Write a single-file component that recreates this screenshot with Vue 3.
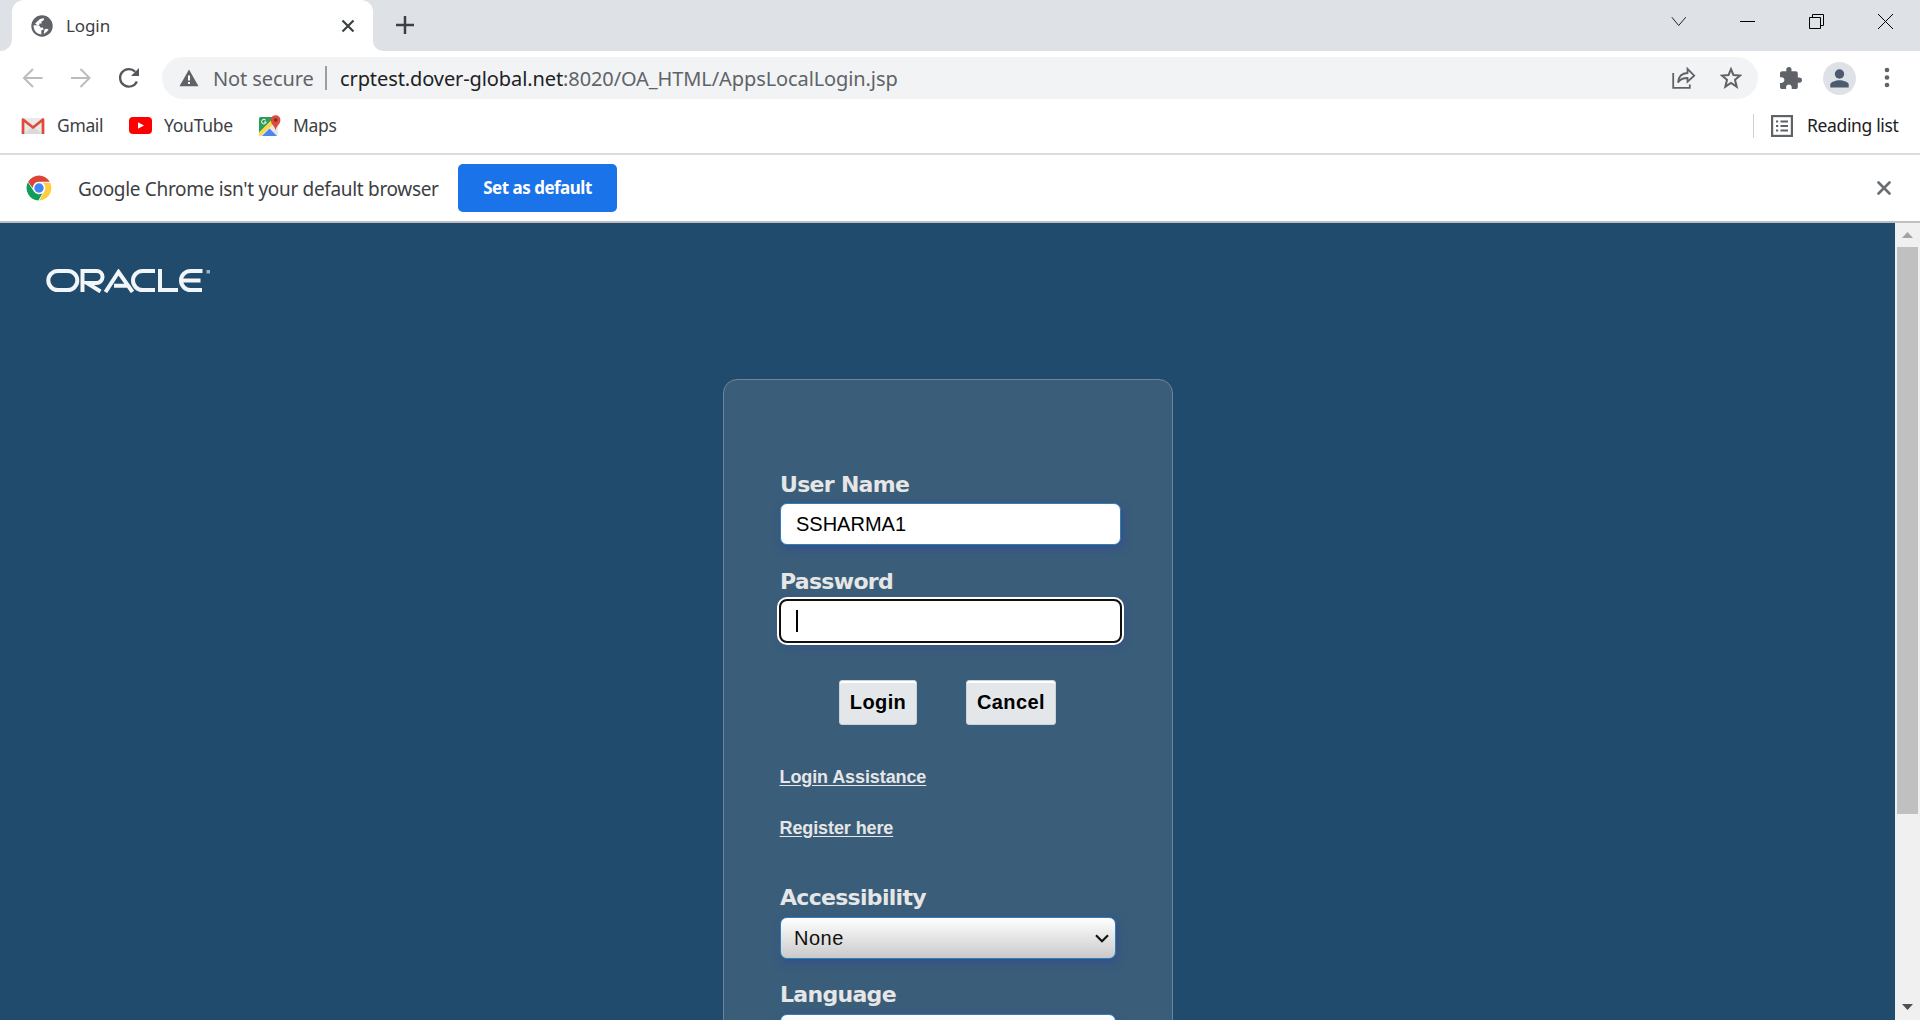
<script setup>
import { ref } from 'vue'

const userName = ref('SSHARMA1')
</script>

<template>
  <div class="window">
    <header class="tabstrip">
      <div class="edge"></div>
      <div class="tab">
        <svg class="globe" width="22" height="22" viewBox="0 0 22 22">
          <circle cx="11" cy="11" r="10.7" fill="#5f6368" />
          <path d="M2.600 10.300H7.200Q9.200 10.500 9.300 12.600H11.400Q12.800 13 12.600 14.600L10.300 15.600V19.400C5.500 19.200 2.400 15.200 2.600 10.300Z" fill="#fff" />
          <path d="M6.200 6.400Q9 3 13 3.300Q13.300 6 10.500 6.300V8.400H8.300V10.200H6.700L4 8.800Z" fill="#fff" />
          <path d="M13.500 14.500Q15.500 13 17.600 14.800Q15.500 17.800 12.600 19Z" fill="#fff" />
        </svg>
        <span class="title t-tab">Login</span>
        <svg class="tabx" width="14" height="14" viewBox="0 0 14 14"><path d="M1.5 1.5L12.5 12.5M12.5 1.5L1.5 12.5" stroke="#3c4043" stroke-width="2.2" /></svg>
      </div>
      <div class="rest">
        <svg class="plus" width="18" height="18" viewBox="0 0 18 18"><path d="M9 .5V17.5M.5 9H17.5" stroke="#3c4043" stroke-width="2.5" stroke-linecap="round" /></svg>
        <div class="controls">
          <svg width="16" height="16" viewBox="0 0 16 16"><path d="M.8 4.200L7.700 12.500L14.800 4.200" fill="none" stroke="#222" /></svg>
          <svg width="16" height="16" viewBox="0 0 16 16"><path d="M0 8.500H15" stroke="#000" /></svg>
          <svg width="16" height="16" viewBox="0 0 16 16"><path d="M.5 4.500H11.500V15.500H.5ZM3.500 4.500V1.500H14.500V12.500H11.500" fill="none" stroke="#000" /></svg>
          <svg width="16" height="16" viewBox="0 0 16 16"><path d="M0 1L15 16M15 1L0 16" stroke="#000" /></svg>
        </div>
      </div>
    </header>

    <div class="toolbar">
      <svg class="nav" width="22" height="22" viewBox="0 0 22 22"><path d="M20.5 11H2M11 2L2 11L11 20" fill="none" stroke="#babcbe" stroke-width="2" /></svg>
      <svg class="nav fwd" width="22" height="22" viewBox="0 0 22 22"><path d="M1 11H19.5M10.5 2L19.5 11L10.5 20" fill="none" stroke="#babcbe" stroke-width="2" /></svg>
      <svg class="nav reload" width="22" height="22" viewBox="0 0 22 22"><path d="M18.900 14.500A8.800 8.800 0 1 1 17.200 4.700" fill="none" stroke="#54585d" stroke-width="2.300" /><path d="M21 1V9H13Z" fill="#54585d" /></svg>
      <div class="omnibox">
        <svg class="warn" width="20" height="18" viewBox="0 0 20 18"><path d="M10 .5L19.500 17.300H.5Z" fill="#5f6368" /><path d="M10 6.500V11.500M10 13V15" stroke="#fff" stroke-width="2" /></svg>
        <span class="notsec">Not secure</span>
        <span class="bar"></span>
        <span class="url"><b>crptest.dover-global.net</b>:8020/OA_HTML/AppsLocalLogin.jsp</span>
        <svg class="share" width="24" height="22" viewBox="0 0 24 22"><path d="M1.200 6V20.800H17.800V17.500" fill="none" stroke="#5f6368" stroke-width="1.800" /><path d="M6 15.500C6.500 9.500 10 6.200 15.500 6V1.800L22.200 8.700L15.500 14.700V11C11 11 8 12.200 6 15.500Z" fill="none" stroke="#5f6368" stroke-width="1.800" /></svg>
        <svg class="star" width="22" height="22" viewBox="0 0 22 22"><path d="M11 2.200L13.400 8L20 8.600L15 12.800L16.700 19.700L11 16L5.300 19.700L7 12.800L2 8.600L8.600 8Z" fill="none" stroke="#5f6368" stroke-width="2" /></svg>
      </div>
      <svg class="puzzle" width="22" height="22" viewBox="2 1 21 21"><path d="M20.500 11H19V7c0-1.100-.9-2-2-2h-4V3.500a2.500 2.500 0 0 0-5 0V5H4c-1.100 0-1.990.9-1.990 2v3.800H3.500c1.490 0 2.700 1.210 2.700 2.700s-1.210 2.700-2.700 2.700H2V20c0 1.100.9 2 2 2h3.800v-1.500c0-1.490 1.210-2.700 2.700-2.700s2.700 1.210 2.700 2.700V22H17c1.100 0 2-.9 2-2v-4h1.500a2.500 2.500 0 0 0 0-5z" fill="#5f6368" /></svg>
      <svg class="avatar" width="33" height="33" viewBox="0 0 33 33"><circle cx="16.500" cy="16.500" r="16.500" fill="#dee1e6" /><circle cx="16.500" cy="12" r="4.700" fill="#4c5a70" /><path d="M7.300 25.500V22.500C7.300 19.800 13 18.200 16.500 18.200S25.700 19.800 25.700 22.500V25.500Z" fill="#4c5a70" /></svg>
      <svg class="dots" width="6" height="22" viewBox="0 0 6 22"><g fill="#5f6368"><circle cx="3" cy="3" r="2.300" /><circle cx="3" cy="10.500" r="2.300" /><circle cx="3" cy="18" r="2.300" /></g></svg>
    </div>

    <nav class="bookmarks">
      <svg class="bi gm" width="24" height="18" viewBox="0 0 24 18"><rect x="1" y="1" width="22" height="16" rx="1.500" fill="#e9e9e9" /><path d="M3 17L12 9L21 17Z" fill="#dadada" /><path d="M2 17V2.500L12 10.500L22 2.500V17" fill="none" stroke="#dc4b3e" stroke-width="2.700" stroke-linejoin="round" /></svg>
      <span class="bt t-gmail">Gmail</span>
      <svg class="bi yt" width="23" height="17" viewBox="0 0 23 17"><rect width="23" height="17" rx="4" fill="#f00" /><path d="M9 5.200L15 8.500L9 11.800Z" fill="#fff" /></svg>
      <span class="bt t-yt">YouTube</span>
      <svg class="bi mp" width="22" height="22" viewBox="0 0 22 22">
        <rect x="0" y="2" width="19" height="19" rx="1.500" fill="#e9e9e9" />
        <path d="M1.500 2H16L0 18V3.500Q0 2 1.500 2Z" fill="#2b9e5b" />
        <path d="M3 21L10.500 13.500L18 21Z" fill="#4b86ee" />
        <path d="M0 17.500L13 4.500L15 8.500L1.500 21Q0 21 0 19Z" fill="#fbd84a" />
        <path d="M16.500 16C16.200 11 11.800 9.500 11.800 5A4.800 4.800 0 0 1 21.400 5C21.400 9.500 16.800 11 16.500 16Z" fill="#dd4b3e" />
        <circle cx="16.600" cy="5" r="1.700" fill="#7e2b24" />
        <path d="M6.800 5.300A2.300 2.300 0 1 0 7.200 7H5" fill="none" stroke="#fff" stroke-width="1" />
      </svg>
      <span class="bt t-maps">Maps</span>
      <span class="bsep"></span>
      <svg class="rl" width="22" height="22" viewBox="0 0 22 22"><rect x="1.100" y="1.100" width="19.800" height="19.800" fill="none" stroke="#5f6368" stroke-width="2.200" /><path d="M5 6.500H7.200M5 11H7.200M5 15.500H7.200M9.500 6.500H17M9.500 11H17M9.500 15.500H17" stroke="#5f6368" stroke-width="2" /></svg>
      <span class="bt t-rl">Reading list</span>
    </nav>

    <div class="infobar">
      <svg class="chrome" width="26" height="26" viewBox="0 0 26 26">
        <circle cx="13" cy="13" r="12.500" fill="#fff" />
        <path d="M2.200 6.800A12.500 12.500 0 0 1 23.800 6.750H13A6.250 6.250 0 0 0 7.600 9.900L6.500 13Z" fill="#db4437" />
        <path d="M1.900 7.300A12.500 12.500 0 0 0 12.400 25.500L16.500 18.200A6.250 6.250 0 0 1 7.600 16.100Z" fill="#0f9d58" />
        <path d="M24.200 7.700A12.500 12.500 0 0 1 13.200 25.500L18.500 16.100A6.250 6.250 0 0 0 16.600 7.700Z" fill="#ffcd40" />
        <circle cx="13" cy="13" r="5.700" fill="#fff" /><circle cx="13" cy="13" r="4.700" fill="#4285f4" />
      </svg>
      <span class="msg">Google Chrome isn't your default browser</span>
      <button class="setdef"><span>Set as default</span></button>
      <svg class="infox" width="14" height="14" viewBox="0 0 14 14"><path d="M1.500 1.500L12.500 12.500M12.500 1.500L1.500 12.500" stroke="#6b6f73" stroke-width="2.600" stroke-linecap="round" /></svg>
    </div>

    <div class="viewport">
      <main class="page">
        <svg class="oracle" width="165" height="24" viewBox="0 0 165 24" role="img" aria-label="Oracle">
          <g fill="none" stroke="#f3f6f8" stroke-width="4">
            <rect x="2.300" y="2" width="29" height="19" rx="9.500" />
            <path d="M36.500 23V2H50.500A6 6 0 0 1 50.500 14H41L54.500 22.500" />
            <path d="M59.500 23L72.500 3L86.500 23M68 16.800H82" />
            <path d="M109 2H96.500A9.500 9.500 0 0 0 96.500 21H109" />
            <path d="M114 0V21H132" />
            <path d="M156.500 2H144.500A9.500 9.500 0 0 0 144.500 21H156M136 11.500H154.500" />
          </g>
          <rect x="160.500" y="1" width="3.500" height="3.500" fill="#9eb1c0" />
        </svg>
        <section class="card">
          <label class="lbl">User Name</label>
          <input v-model="userName" class="field" type="text" />
          <label class="lbl second">Password</label>
          <div class="field focus"><i class="caret"></i></div>
          <div class="buttons">
            <button class="btn login">Login</button>
            <button class="btn cancel">Cancel</button>
          </div>
          <a class="link l1">Login Assistance</a>
          <a class="link l2">Register here</a>
          <label class="lbl acc">Accessibility</label>
          <div class="select">
            <span>None</span>
            <svg width="14" height="9" viewBox="0 0 14 9"><path d="M1 1.200L7 7.200L13 1.200" fill="none" stroke="#111" stroke-width="2.200" /></svg>
          </div>
          <label class="lbl lang">Language</label>
          <div class="select"></div>
        </section>
      </main>
      <aside class="scroll">
        <svg width="11" height="6" viewBox="0 0 11 6"><path d="M0 6L5.500 0L11 6Z" fill="#a3a3a3" /></svg>
        <div class="thumb"></div>
        <svg class="down" width="11" height="6" viewBox="0 0 11 6"><path d="M0 0L5.500 6L11 0Z" fill="#505050" /></svg>
      </aside>
    </div>
  </div>
</template>

<style>
html, body { margin: 0; overflow: hidden; }
</style>

<style scoped>
.window { width: 1920px; height: 1020px; display: flex; flex-direction: column; overflow: hidden; background: #fff; font-family: "Noto Sans", "Open Sans", sans-serif; color: #3c4043; }
.window * { box-sizing: border-box; }
svg { display: block; flex: none; }
span { white-space: nowrap; }
.tabstrip { height: 51px; display: flex; flex: none; background: #fff; }
.edge { width: 12px; background: #dee1e6; border-bottom-right-radius: 12px; }
.tab { width: 361px; background: linear-gradient(#dee1e6 0 20px, #fff 20px); display: flex; align-items: center; position: relative; }
.tab::before { content: ""; position: absolute; inset: 0; background: #fff; border-radius: 12px 12px 0 0; }
.tab > * { position: relative; }
.globe { margin-left: 19px; }
.title { margin-left: 13px; font-size: 17px; letter-spacing: -.1px; width: 260px; }
.tabx { margin-left: 15px; }
.rest { flex: 1; background: #dee1e6; border-bottom-left-radius: 10px; display: flex; }
.plus { margin: 16px 0 0 23px; }
.controls { display: flex; gap: 53px; margin: 13px 26px 0 auto; height: 16px; }
.toolbar { height: 54px; flex: none; display: flex; align-items: center; }
.nav { margin-left: 22px; }
.fwd { margin-left: 26px; }
.reload { margin-left: 26px; }
.omnibox { margin-left: 22px; width: 1596px; height: 42px; border-radius: 21px; background: #f1f3f4; display: flex; align-items: center; font-size: 20px; }
.warn { margin-left: 17px; }
.notsec { margin-left: 14px; width: 112px; color: #5f6368; letter-spacing: -.1px; }
.bar { width: 2px; height: 24px; background: #9a9da1; }
.url { margin-left: 13px; color: #5f6368; flex: 1; letter-spacing: -.1px; }
.url b { font-weight: 400; color: #202124; }
.star { margin: 0 16px 0 24px; }
.puzzle { margin-left: 22px; }
.avatar { margin-left: 21px; }
.dots { margin-left: 28px; }
.bookmarks { height: 48px; flex: none; display: flex; align-items: center; padding-bottom: 7px; font-size: 17.5px; letter-spacing: -.35px; }
.gm { margin-left: 21px; }
.bt { margin: -1px 0 0 12px; }
.t-gmail { width: 60px; }
.yt { margin-left: 12px; }
.t-yt { width: 82px; letter-spacing: -.25px; }
.mp { margin-left: 13px; }
.bsep { width: 1px; height: 24px; background: #cfd1d4; margin-left: auto; }
.rl { margin-left: 17px; }
.t-rl { margin-left: 14px; width: 113px; color: #202124; }
.infobar { height: 70px; flex: none; display: flex; align-items: center; border-top: 2px solid #dadce0; border-bottom: 2px solid #bcc0c4; }
.chrome { margin-left: 26px; }
.msg { margin-left: 26px; width: 380px; font-size: 19px; letter-spacing: -.32px; padding-top: 2px; }
.setdef { width: 159px; height: 48px; border: 0; border-radius: 5px; background: #1a73e8; color: #fff; font: 700 17px "Noto Sans", sans-serif; letter-spacing: -.5px; padding: 0 0 2px; }
.infox { margin-left: auto; margin-right: 29px; }
.viewport { flex: 1; min-height: 0; display: flex; }
.page { width: 1895px; background: #204b6d; overflow: hidden; }
.oracle { margin: 46px 0 0 46px; }
.card { width: 450px; height: 900px; margin: 86px 0 0 723px; border: 1px solid #6b869c; border-radius: 14px; background: #3a5d7a; padding: 92px 52px 0 56px; display: flex; flex-direction: column; }
.lbl { font: 700 22px/26px "DejaVu Sans", Verdana, sans-serif; letter-spacing: -.7px; color: #e6e6e6; height: 31px; flex: none; }
.second { margin-top: 24px; }
.field { width: 341px; height: 42px; flex: none; border: 1px solid #2f7fb8; border-radius: 7px; background: #fff; box-shadow: 2px 4px 8px #36508a; font: 20px "Liberation Sans", sans-serif; padding: 0 15px; color: #000; outline: 0; }
.focus { border: 1px solid #bbb; outline: 2px solid #101010; outline-offset: -1px; box-shadow: 0 0 0 3px #fff, 3px 4px 8px #36508a; display: flex; align-items: center; }
.caret { width: 2px; height: 22px; background: #000; }
.buttons { display: flex; gap: 49px; margin: 38px 0 0 59px; flex: none; }
.btn { height: 45px; width: 78px; border: 1px solid #cbd2d8; border-radius: 3px; background: #e4e7ea; box-shadow: inset 0 2px #fff; font: 700 20px "Liberation Sans", sans-serif; letter-spacing: .4px; color: #000; padding: 0 0 1px; }
.cancel { width: 90px; }
.link { font: 700 18px/22px "Liberation Sans", sans-serif; letter-spacing: -.1px; color: #e6e6e6; text-decoration: underline; text-underline-offset: 2px; height: 22px; width: fit-content; margin-left: -.5px; flex: none; }
.l1 { margin-top: 41px; }
.l2 { margin-top: 29px; }
.acc { margin-top: 46px; height: 32px; }
.lang { margin-top: 23px; height: 32px; }
.select { width: 336px; height: 42px; flex: none; border: 1px solid #2f7fb8; border-radius: 7px; background: linear-gradient(#fff, #cacaca); box-shadow: 2px 4px 8px #36508a; display: flex; align-items: center; justify-content: space-between; padding: 0 6px 0 13px; font: 20px "Liberation Sans", sans-serif; letter-spacing: .5px; color: #111; }
.scroll { width: 25px; background: #f0f0f0; display: flex; flex-direction: column; align-items: center; padding: 9px 0 10px; }
.scroll svg { flex: none; }
.thumb { width: 21px; height: 567px; background: #c0c0c0; margin-top: 9px; flex: none; }
.down { margin-top: auto; }
</style>
